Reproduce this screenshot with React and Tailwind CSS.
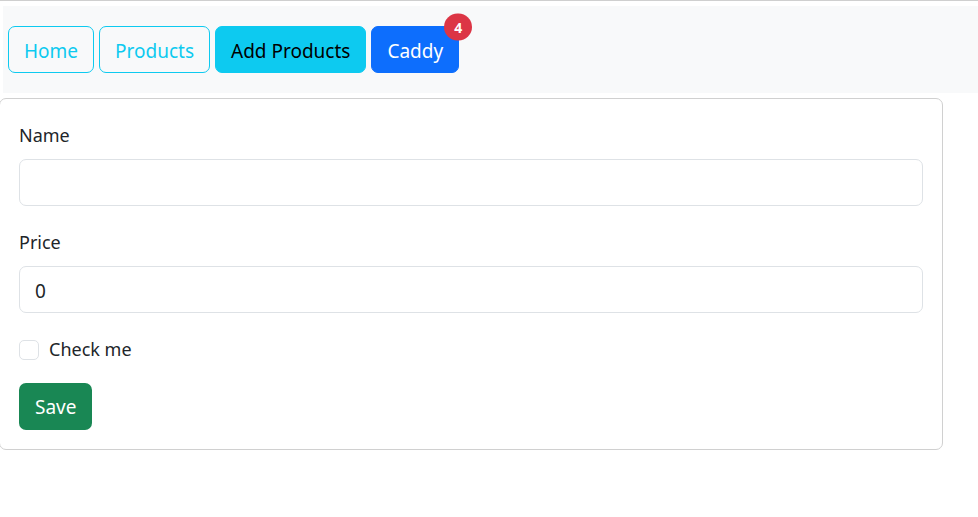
import React from 'react';

const font = { fontFamily: '"Noto Sans", "Open Sans", sans-serif' };

const NavButton = ({ children, variant }) => {
  const styles = {
    outline: 'border border-[#0dcaf0] text-[#0dcaf0] bg-transparent',
    info: 'border border-[#0dcaf0] bg-[#0dcaf0] text-black',
    primary: 'border border-[#0d6efd] bg-[#0d6efd] text-white',
  };
  return (
    <button className={`relative h-[47px] px-[15px] pt-[3px] rounded-[7px] text-[19px] leading-none ${styles[variant]}`}>
      {children}
    </button>
  );
};

const Field = ({ label, value }) => (
  <div className="mb-[23px]">
    <label className="block text-[18px] leading-[27px] text-[#212529] mb-[10px]">{label}</label>
    <input
      className="block w-full h-[47px] px-[15px] pt-[2px] border border-[#dee2e6] rounded-[7px] text-[19px] text-[#212529] outline-none"
      defaultValue={value}
      style={font}
    />
  </div>
);

export default function App() {
  return (
    <div className="w-[978px] h-[517px] bg-white border-t border-[#cfcfcf] overflow-hidden" style={font}>
      <nav className="ml-[3px] mt-[5px] h-[87px] bg-[#f8f9fa] flex items-start gap-[5px] pl-[5px] pt-[20px]">
        <NavButton variant="outline">Home</NavButton>
        <NavButton variant="outline">Products</NavButton>
        <NavButton variant="info">Add Products</NavButton>
        <NavButton variant="primary">
          Caddy
          <span className="absolute left-full top-0 -translate-x-1/2 -translate-y-1/2 w-[28px] h-[27px] rounded-full bg-[#dc3545] text-white text-[14px] font-bold flex items-center justify-center">
            4
          </span>
        </NavButton>
      </nav>
      <div className="mt-[5px] -ml-[1px] w-[944px] border border-[#d0d0d0] rounded-[7px] px-[19px] pt-[23px] pb-[19px]">
        <Field label="Name" value="" />
        <Field label="Price" value="0" />
        <div className="flex items-center gap-[10px] mb-[20px]">
          <span className="w-[20px] h-[20px] border border-[#dee2e6] rounded-[5px] bg-white" />
          <span className="text-[18px] text-[#212529]">Check me</span>
        </div>
        <button className="h-[47px] px-[16px] pt-[2px] rounded-[7px] bg-[#198754] text-white text-[19px]">Save</button>
      </div>
    </div>
  );
}
